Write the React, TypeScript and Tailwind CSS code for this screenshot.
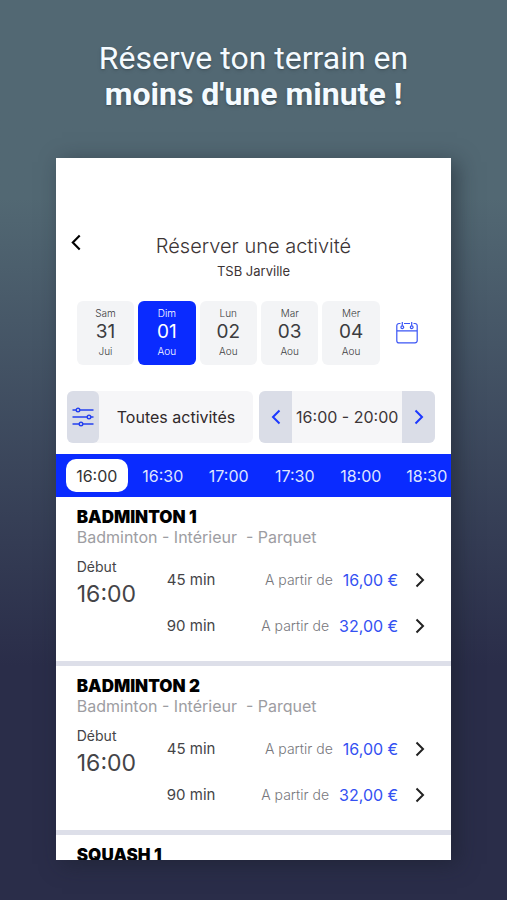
import React from 'react';

const days = [
  { name: 'Sam', num: '31', month: 'Jui' },
  { name: 'Dim', num: '01', month: 'Aou', active: true },
  { name: 'Lun', num: '02', month: 'Aou' },
  { name: 'Mar', num: '03', month: 'Aou' },
  { name: 'Mer', num: '04', month: 'Aou' },
];

const slots = ['16:00', '16:30', '17:00', '17:30', '18:00', '18:30'];

const courts = ['BADMINTON 1', 'BADMINTON 2'];

const offers = [
  { duration: '45 min', price: '16,00 €' },
  { duration: '90 min', price: '32,00 €' },
];

function Chevron({ left = false, className = '' }: { left?: boolean; className?: string }) {
  return (
    <svg viewBox="0 0 10 16" className={className} fill="none" stroke="currentColor" strokeWidth="2" aria-hidden="true">
      <path d={left ? 'M8.5 1.5 2 8l6.5 6.5' : 'M1.5 1.5 8 8l-6.5 6.5'} />
    </svg>
  );
}

function CalendarIcon() {
  return (
    <svg viewBox="0 0 22 22" className="h-[22px] w-[22px]" fill="none" stroke="#3b55f5" strokeWidth="1.2" aria-hidden="true">
      <path d="M4.5 1.5H3A2.2 2.2 0 0 0 .8 3.7v15a2.2 2.2 0 0 0 2.2 2.2h16a2.2 2.2 0 0 0 2.2-2.2v-15A2.2 2.2 0 0 0 19 1.5h-1.5M8 1.5h6M.8 8.8h20.4" />
      <circle cx="6.3" cy="5.2" r="1.4" />
      <circle cx="15.7" cy="5.2" r="1.4" />
      <path d="M6.3 0v3.8M15.7 0v3.8" />
    </svg>
  );
}

function SlidersIcon() {
  return (
    <svg viewBox="0 0 22 20" className="h-5 w-[22px]" fill="none" stroke="#2440f0" strokeWidth="1.4" aria-hidden="true">
      <path d="M.5 3H4M8 3h13.500M.5 10H15M19 10h2.500M.5 17H7M11 17h10.500" />
      <circle cx="6" cy="3" r="1.8" />
      <circle cx="17" cy="10" r="1.8" />
      <circle cx="9" cy="17" r="1.8" />
    </svg>
  );
}

function Court({ title }: { title: string }) {
  return (
    <section className="border-b-[5px] border-[#dddfe9] px-[21px] pt-2.5 pb-[23px]">
      <h2 className="text-[17px] leading-[21px] font-black text-black">{title}</h2>
      <p className="text-base leading-[18px] whitespace-pre text-[#9d9da2]">Badminton - Intérieur  - Parquet</p>
      <div className="mt-[11px] flex">
        <div className="w-[90px] text-[#444447]">
          <p className="text-sm leading-5">Début</p>
          <p className="text-[23px] leading-[34px]">16:00</p>
        </div>
        <ul className="flex flex-1 flex-col gap-[22px] pt-[11px]">
          {offers.map((o) => (
            <li key={o.duration}>
              <button type="button" className="flex w-full items-center pr-[5px] leading-6">
                <span className="flex-1 text-left text-[15px] text-[#444447]">{o.duration}</span>
                <span className="text-sm leading-6 font-light text-[#77777c]">A partir de</span>
                <span className="ml-2.5 text-base leading-6 text-[#3451f2]">{o.price}</span>
                <Chevron className="ml-[17px] h-4 w-2.5 text-[#222]" />
              </button>
            </li>
          ))}
        </ul>
      </div>
    </section>
  );
}

export default function App() {
  return (
    <div className="flex h-screen flex-col bg-linear-to-b from-[#526873] from-22% to-[#2a2d49] to-74% px-[11%] pt-10 pb-10">
      <h1 className="text-center font-['Roboto',sans-serif] text-[32px] leading-9 font-normal text-[#f5fbff] text-shadow-md">
        Réserve ton terrain en
        <br />
        <strong className="font-bold">moins d'une minute !</strong>
      </h1>
      <main className="mt-[46px] min-h-0 flex-1 overflow-hidden bg-white font-['Inter','Liberation_Sans',sans-serif] shadow-[6px_4px_20px_rgba(24,30,40,0.5)]">
        <header className="grid grid-cols-[40px_1fr_40px] pt-[76px] text-center text-[#3c3435]">
          <button type="button" aria-label="Retour" className="flex h-[17px] pl-3.5 text-black">
            <Chevron left className="h-[17px] w-3" />
          </button>
          <div>
            <h2 className="text-xl leading-6 font-light">Réserver une activité</h2>
            <p className="mt-1 text-[13px] leading-[18px]">TSB Jarville</p>
          </div>
        </header>

        <div className="mt-[21px] flex items-center pl-[21px]">
          <div className="flex w-[303px] gap-1">
            {days.map((d) => (
              <button
                key={d.num}
                type="button"
                className={
                  d.active
                    ? 'flex h-16 flex-1 flex-col items-center justify-center rounded-md bg-[#0a2bff] pb-0.5 text-white'
                    : 'flex h-16 flex-1 flex-col items-center justify-center rounded-md bg-[#f3f4f6] pb-0.5 text-[#3c3c40]'
                }
              >
                <span className="text-[10px] leading-4 font-light">{d.name}</span>
                <span className="text-[19px] leading-[22px]">{d.num}</span>
                <span className="text-[10px] leading-4 font-light">{d.month}</span>
              </button>
            ))}
          </div>
          <button type="button" aria-label="Calendrier" className="ml-4">
            <CalendarIcon />
          </button>
        </div>

        <div className="mt-[26px] flex gap-1.5 pr-4 pl-[11px]">
          <button type="button" className="flex h-[52px] flex-1 items-center rounded-md bg-[#f6f6f8] text-base text-[#30292b]">
            <span className="flex h-full w-8 items-center justify-center rounded-md bg-[#dadde7]">
              <SlidersIcon />
            </span>
            <span className="flex-1 text-center whitespace-nowrap">Toutes activités</span>
          </button>
          <div className="flex h-[52px] w-[176px] items-center overflow-hidden rounded-md bg-[#f6f6f8] text-[#3c3537]">
            <button type="button" aria-label="Plage précédente" className="flex h-full w-[33px] items-center justify-center bg-[#dadde7] text-[#1c38ff]">
              <Chevron left className="h-4 w-2.5" />
            </button>
            <span className="flex-1 text-center text-base whitespace-nowrap">16:00 - 20:00</span>
            <button type="button" aria-label="Plage suivante" className="flex h-full w-[33px] items-center justify-center bg-[#dadde7] text-[#1c38ff]">
              <Chevron className="h-4 w-2.5" />
            </button>
          </div>
        </div>

        <nav className="mt-[11px] flex h-[43px] items-center gap-1 overflow-hidden bg-[#0a2bff] pl-2.5 text-base">
          {slots.map((s, i) => (
            <button
              key={s}
              type="button"
              className={
                i === 0
                  ? 'h-[33px] w-[62px] shrink-0 rounded-[10px] bg-white text-[#333]'
                  : 'h-[33px] w-[62px] shrink-0 text-[#dfe5ff]'
              }
            >
              {s}
            </button>
          ))}
        </nav>

        {courts.map((c) => (
          <Court key={c} title={c} />
        ))}
        <section className="px-[21px] pt-2.5">
          <h2 className="text-[17px] leading-[21px] font-black text-black">SQUASH 1</h2>
        </section>
      </main>
    </div>
  );
}
